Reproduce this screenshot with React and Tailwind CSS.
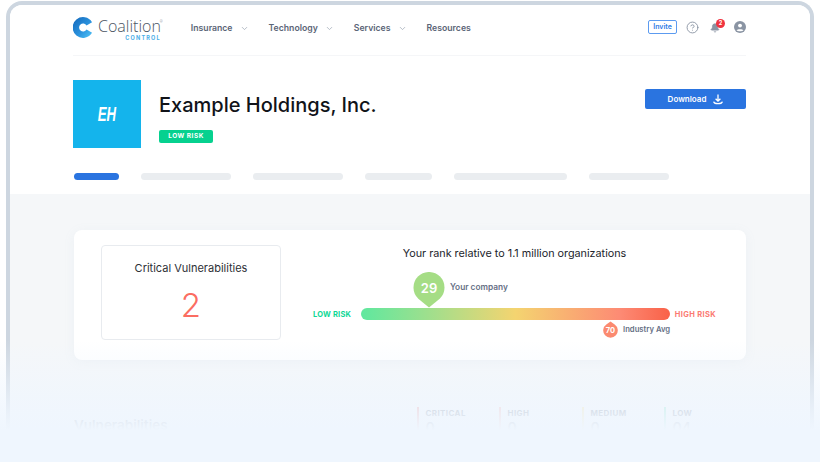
import React from 'react';
import { ChevronDown, CircleHelp, Bell } from 'lucide-react';

const navItems = [
  { label: 'Insurance', menu: true },
  { label: 'Technology', menu: true },
  { label: 'Services', menu: true },
  { label: 'Resources', menu: false },
];

const tabWidths = ['w-[90px]', 'w-[90px]', 'w-[67px]', 'w-[113px]', 'w-[80px]'];

const severities = [
  { label: 'CRITICAL', bar: 'bg-[#ee9a9a]', width: 'w-[82px]', value: '0' },
  { label: 'HIGH', bar: 'bg-[#f5b5b0]', width: 'w-[83px]', value: '0' },
  { label: 'MEDIUM', bar: 'bg-[#f6e3a0]', width: 'w-[82px]', value: '0' },
  { label: 'LOW', bar: 'bg-[#8fe6cc]', width: 'w-[60px]', value: '04' },
];

function Logo() {
  return (
    <div className="flex items-center gap-[5px]">
      <svg width="20" height="21" viewBox="0 0 20 21">
        <defs>
          <linearGradient id="logoBlue" x1="0" y1="0" x2="1" y2="1">
            <stop offset="0" stopColor="#1a73c4" />
            <stop offset="0.6" stopColor="#2b93de" />
            <stop offset="1" stopColor="#45b4ee" />
          </linearGradient>
        </defs>
        <path
          d="M16.3 6.85 A7.2 7.2 0 1 0 16.3 14.15"
          fill="none"
          stroke="url(#logoBlue)"
          strokeWidth="6.4"
        />
      </svg>
      <div className="mt-[5px] flex flex-col items-end">
        <span className="relative h-[15px] font-['Open_Sans',sans-serif] text-[16px] font-light leading-[15px] text-[#4b5563]">
          Coalition
          <span className="absolute -right-[2px] top-0 text-[4px] leading-[5px]">®</span>
        </span>
        <span className="mt-[1px] h-[6px] font-['Inter',sans-serif] text-[5.5px] font-bold leading-[6px] tracking-[1.2px] text-[#4aaee8]">
          CONTROL
        </span>
      </div>
    </div>
  );
}

function TopNav() {
  return (
    <div className="flex h-[51px] items-center border-b border-[#f5f6f8] pb-[6px]">
      <Logo />
      <nav className="ml-[30px] mt-[3px] flex items-center gap-[20px]">
        {navItems.map((item) => (
          <div key={item.label} className="flex items-center gap-[7px]">
            <span className="text-[8.7px] font-semibold text-[#5b6577]">{item.label}</span>
            {item.menu && <ChevronDown className="h-[9px] w-[9px] text-[#a9b1bd]" strokeWidth={2.2} />}
          </div>
        ))}
      </nav>
      <div className="ml-auto flex items-center">
        <div className="flex h-[14px] w-[29px] items-center justify-center rounded-[2px] border border-[#5c9bf0] text-[7px] font-semibold text-[#2f7be5]">
          Invite
        </div>
        <CircleHelp className="ml-[9px] h-[13px] w-[13px] text-[#8a94a3]" strokeWidth={1.7} />
        <div className="relative ml-[11px] mt-[1px]">
          <Bell className="h-[10px] w-[10px] fill-[#8a94a3] text-[#8a94a3]" />
          <span className="absolute -right-[5px] -top-[4px] flex h-[9px] w-[9px] items-center justify-center rounded-full bg-[#ef3340] text-[5.5px] font-bold text-white">
            2
          </span>
        </div>
        <svg className="ml-[14px]" width="12" height="12" viewBox="0 0 13 13">
          <circle cx="6.5" cy="6.5" r="6.5" fill="#8a94a3" />
          <circle cx="6.5" cy="5" r="2.1" fill="#fff" />
          <path d="M2.8 10.2 C3.4 8.4 9.6 8.4 10.2 10.2 C9 11.3 4 11.3 2.8 10.2 Z" fill="#fff" />
        </svg>
      </div>
    </div>
  );
}

function CompanyHeader() {
  return (
    <div className="mt-[24px] flex items-start">
      <div className="flex h-[68px] w-[68px] items-center justify-center bg-[#14b4ec] font-['Liberation_Sans',sans-serif] text-[20px] font-bold italic text-white">
        <span className="inline-block scale-x-[0.66]">EH</span>
      </div>
      <div className="ml-[18px] pt-[13px]">
        <h1 className="text-[20px] font-medium leading-[25px] text-[#111319]">Example Holdings, Inc.</h1>
        <div className="mt-[12px] flex h-[13px] w-[54px] items-center justify-center rounded-[2px] bg-[#06d18f] text-[6.5px] font-bold tracking-[0.5px] text-white">
          LOW RISK
        </div>
      </div>
      <button
        type="button"
        className="mt-[9px] ml-auto flex h-[20px] w-[101px] items-center justify-center gap-[7px] rounded-[2px] bg-[#2a74e0] text-[8px] font-semibold text-white"
      >
        Download
        <svg width="10" height="11" viewBox="0 0 10 11" fill="none" stroke="#fff" strokeWidth="1.3">
          <path d="M5 0.5 V7 M2.6 4.8 L5 7.2 L7.4 4.8" />
          <path d="M0.7 7.6 C0.9 10.2 9.1 10.2 9.3 7.6" />
        </svg>
      </button>
    </div>
  );
}

function RankCard() {
  return (
    <section className="flex h-[130px] rounded-[8px] bg-white pl-[27px] shadow-[0_2px_12px_rgba(140,160,190,0.08)]">
      <div className="mt-[15px] flex h-[95px] w-[180px] flex-col items-center rounded-[4px] border border-[#e8ebef] pt-[15px]">
        <span className="text-[11px] leading-[14px] text-[#2d2f36]">Critical Vulnerabilities</span>
        <span className="mt-[9px] font-['Inter',sans-serif] text-[33px] font-light leading-[42px] text-[#fb6d62]">2</span>
      </div>
      <div className="ml-[32px] flex w-[403px] flex-col">
        <p className="mt-[17px] text-center text-[10.8px] leading-[14px] text-[#22242b]">
          Your rank relative to 1.1 million organizations
        </p>
        <div className="relative mt-[10px] flex h-[70px] items-start pt-[37px]">
          <span className="mt-[2px] w-[48px] text-[7.5px] font-bold leading-[10px] tracking-[0.2px] text-[#0fd795]">LOW RISK</span>
          <div className="h-[12px] w-[309px] rounded-full bg-[linear-gradient(90deg,#5fe89f_0%,#a5de8b_24%,#f4d470_50%,#fd8a74_84%,#f96148_100%)]" />
          <span className="ml-[5px] mt-[2px] text-[7.5px] font-bold leading-[10px] tracking-[0.35px] text-[#fb7a72]">HIGH RISK</span>
          {/* score pins sit on top of the bar */}
          <div className="absolute left-[100px] top-[1px] flex items-center">
            <svg width="32" height="36" viewBox="0 0 32 36">
              <path d="M16 35.5 L5.3 26.7 A15.5 15.5 0 1 1 26.7 26.7 Z" fill="#a5dd85" />
              <text x="16" y="20.5" textAnchor="middle" fontSize="13" fontWeight="600" fill="#fff" fontFamily="Inter, sans-serif">29</text>
            </svg>
            <span className="ml-[5px] mb-[5px] text-[8.3px] font-semibold text-[#667085]">Your company</span>
          </div>
          <div className="absolute left-[290px] top-[50px] flex items-center">
            <svg width="15" height="17" viewBox="0 0 15 17">
              <path d="M7.5 0.5 L11.7 3.5 A7.3 7.3 0 1 1 3.3 3.5 Z" fill="#fb8a70" />
              <text x="7.5" y="12" textAnchor="middle" fontSize="7.5" fontWeight="700" fill="#fff" fontFamily="Inter, sans-serif">70</text>
            </svg>
            <span className="ml-[5px] text-[7.7px] font-semibold text-[#667085]">Industry Avg</span>
          </div>
        </div>
      </div>
    </section>
  );
}

function VulnerabilityRow() {
  return (
    <div className="mt-[47px] flex items-start">
      <h2 className="mt-[8px] text-[13.5px] font-semibold text-[#7b8494]">Vulnerabilities</h2>
      <div className="ml-auto flex pr-[22px]">
        {severities.map((s) => (
          <div key={s.label} className={`flex ${s.width}`}>
            <div className={`h-[24px] w-[1.5px] ${s.bar}`} />
            <div className="ml-[7px]">
              <div className="text-[8px] font-bold leading-[12px] tracking-[0.4px] text-[#7b8494]">{s.label}</div>
              <div className="text-[14px] font-semibold leading-[18px] text-[#7b8494]">{s.value}</div>
            </div>
          </div>
        ))}
      </div>
    </div>
  );
}

export default function App() {
  return (
    <div className="relative h-[462px] w-[820px] overflow-hidden bg-white font-['Inter',sans-serif]">
      <div className="mx-[6px] mt-[1px] h-[470px] overflow-hidden rounded-t-[16px] border-4 border-b-0 border-[#cdd6e0]">
        <header className="h-[189px] bg-white pl-[63px] pr-[64px]">
          <TopNav />
          <CompanyHeader />
          <div className="mt-[25px] flex gap-[22px]">
            <div className="ml-[1px] h-[6.5px] w-[45px] rounded-full bg-[#2a74e0]" />
            {tabWidths.map((w, i) => (
              <div key={i} className={`h-[6.5px] rounded-full bg-[#eaedf0] ${w}`} />
            ))}
          </div>
        </header>
        <main className="h-[280px] bg-[#f5f7f9] pl-[64px] pr-[64px] pt-[36px]">
          <RankCard />
          <VulnerabilityRow />
        </main>
      </div>
      {/* fade-out over the bottom of the page */}
      <div className="pointer-events-none absolute inset-x-0 bottom-0 h-[122px] bg-[linear-gradient(180deg,rgba(239,246,254,0)_0%,rgba(239,246,254,0.82)_58%,#eff6fe_74%)]" />
    </div>
  );
}
